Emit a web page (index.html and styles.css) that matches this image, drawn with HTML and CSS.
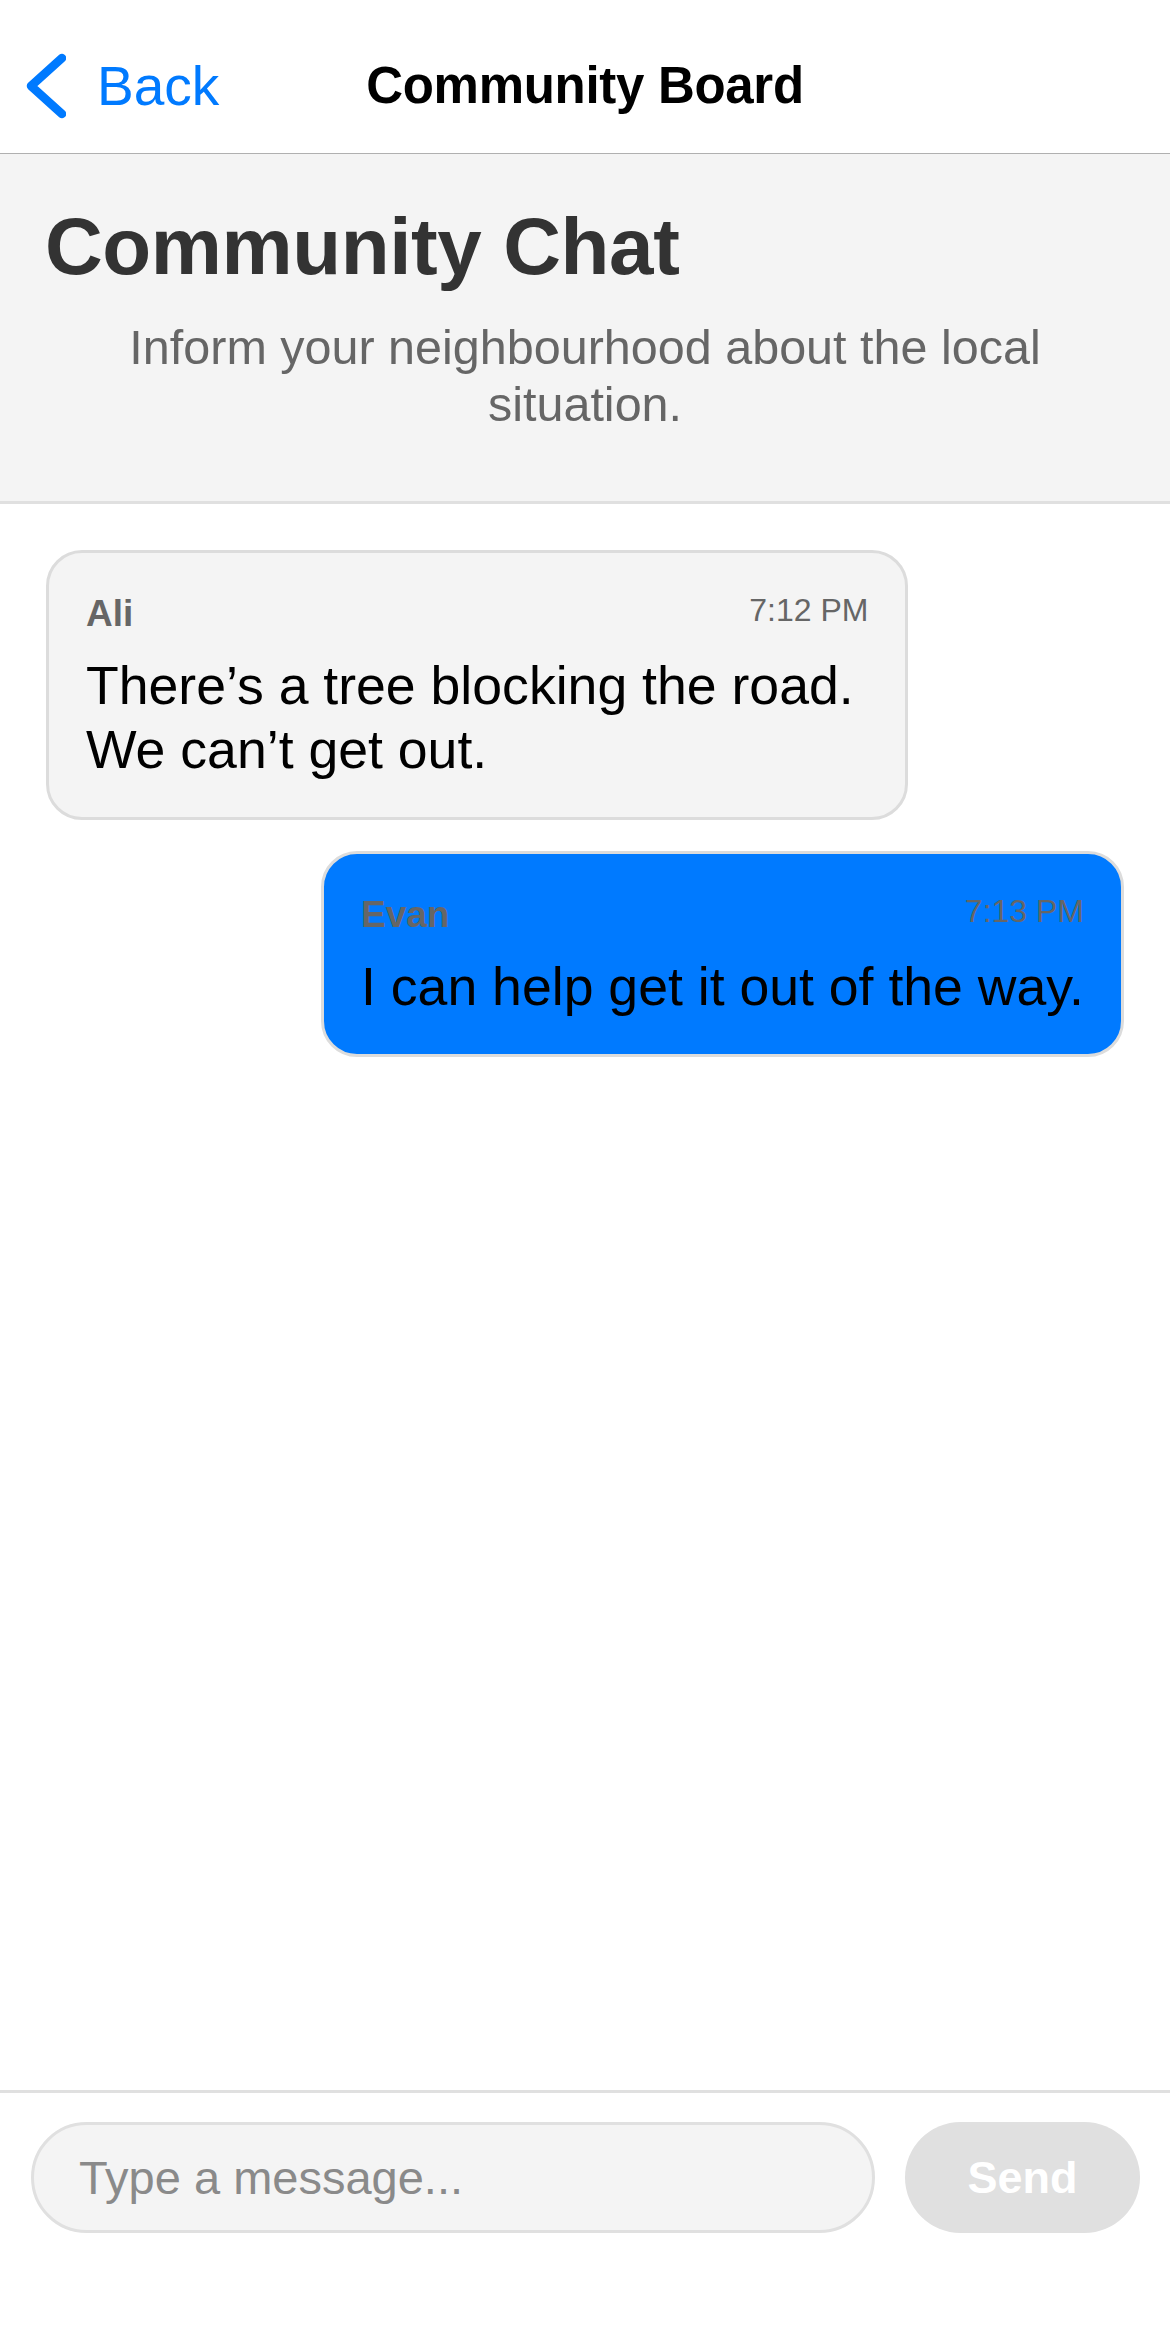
FILE: index.html
```html
<!DOCTYPE html>
<html lang="en">
<head>
<meta charset="utf-8">
<title>Community Board</title>
<link rel="stylesheet" href="styles.css">
</head>
<body>
<div class="app">
  <header class="navbar">
    <div class="nav-left">
      <svg class="chevron" width="44" height="70" viewBox="0 0 44 70" aria-hidden="true">
        <path d="M40 7 L9 35 L40 63" fill="none" stroke="#007aff" stroke-width="8.5" stroke-linecap="round" stroke-linejoin="round"/>
      </svg>
      <span class="back-label">Back</span>
    </div>
    <div class="nav-title">Community Board</div>
    <div class="nav-right"></div>
  </header>

  <section class="intro">
    <h1 class="intro-title">Community Chat</h1>
    <p class="intro-sub">Inform your neighbourhood about the local situation.</p>
  </section>

  <main class="chat">
    <div class="bubble bubble-other">
      <div class="bubble-head">
        <span class="bubble-name">Ali</span>
        <span class="bubble-time">7:12 PM</span>
      </div>
      <div class="bubble-text">There’s a tree blocking the road. We can’t get out.</div>
    </div>
    <div class="bubble bubble-me">
      <div class="bubble-head">
        <span class="bubble-name">Evan</span>
        <span class="bubble-time">7:13 PM</span>
      </div>
      <div class="bubble-text">I can help get it out of the way.</div>
    </div>
  </main>

  <footer class="composer">
    <input class="composer-input" type="text" placeholder="Type a message...">
    <button class="composer-send" type="button">Send</button>
  </footer>
</div>
</body>
</html>
```
FILE: styles.css
```css
* {
  box-sizing: border-box;
}

html, body {
  margin: 0;
  padding: 0;
  background: #ffffff;
}

body {
  font-family: "Liberation Sans", Arial, sans-serif;
  color: #000;
}

.app {
  display: flex;
  flex-direction: column;
  height: 2340px;
  width: 1170px;
}

/* Navbar */
.navbar {
  height: 154px;
  flex: none;
  display: grid;
  grid-template-columns: 1fr auto 1fr;
  align-items: center;
  padding-top: 18px;
  border-bottom: 1px solid #b0b0b0;
  background: #fff;
}

.nav-left {
  display: flex;
  align-items: center;
  padding-left: 22px;
}

.chevron {
  display: block;
  flex: none;
}

.back-label {
  margin-left: 31px;
  font-size: 55px;
  line-height: 64px;
  color: #007aff;
}

.nav-title {
  font-size: 51px;
  line-height: 64px;
  font-weight: 700;
  letter-spacing: -0.3px;
  color: #000;
}

/* Intro */
.intro {
  flex: none;
  background: #f4f4f4;
  padding: 45px 45px 68px 45px;
  border-bottom: 3px solid #e0e0e0;
}

.intro-title {
  margin: 0;
  font-size: 80px;
  line-height: 96px;
  font-weight: 700;
  letter-spacing: -0.4px;
  color: #333333;
}

.intro-sub {
  margin: 24px 0 0;
  font-size: 48.5px;
  line-height: 57px;
  text-align: center;
  color: #666666;
}

/* Chat */
.chat {
  flex: 1;
  display: flex;
  flex-direction: column;
  align-items: flex-start;
  gap: 31px;
  padding: 46px;
}

.bubble {
  max-width: 80%;
  border: 3px solid #dcdcdc;
  border-radius: 36px;
  padding: 39px 37px 36px;
}

.bubble-other {
  background: #f4f4f4;
}

.bubble-me {
  align-self: flex-end;
  background: #007aff;
}

.bubble-head {
  display: flex;
  justify-content: space-between;
  align-items: flex-start;
  gap: 24px;
}

.bubble-name {
  font-size: 37px;
  line-height: 43px;
  font-weight: 700;
  color: #666666;
}

.bubble-time {
  font-size: 32px;
  line-height: 37px;
  color: #666666;
}

.bubble-text {
  margin-top: 18px;
  font-size: 53.6px;
  line-height: 64px;
  color: #000;
}

/* Composer */
.composer {
  flex: none;
  display: flex;
  align-items: center;
  gap: 30px;
  border-top: 3px solid #e0e0e0;
  padding: 29px 30px 107px 31px;
}

.composer-input {
  flex: 1;
  min-width: 0;
  height: 111px;
  border: 3px solid #e0e0e0;
  border-radius: 56px;
  background: #f4f4f4;
  padding: 0 0 0 45px;
  font-family: "Liberation Sans", Arial, sans-serif;
  font-size: 47px;
  color: #000;
  outline: none;
}

.composer-input::placeholder {
  color: #8a8a8a;
}

.composer-send {
  flex: none;
  width: 235px;
  height: 111px;
  border: none;
  border-radius: 56px;
  background: #e0e0e0;
  color: #ffffff;
  font-family: "Liberation Sans", Arial, sans-serif;
  font-size: 45px;
  font-weight: 700;
  padding: 0;
}
```
